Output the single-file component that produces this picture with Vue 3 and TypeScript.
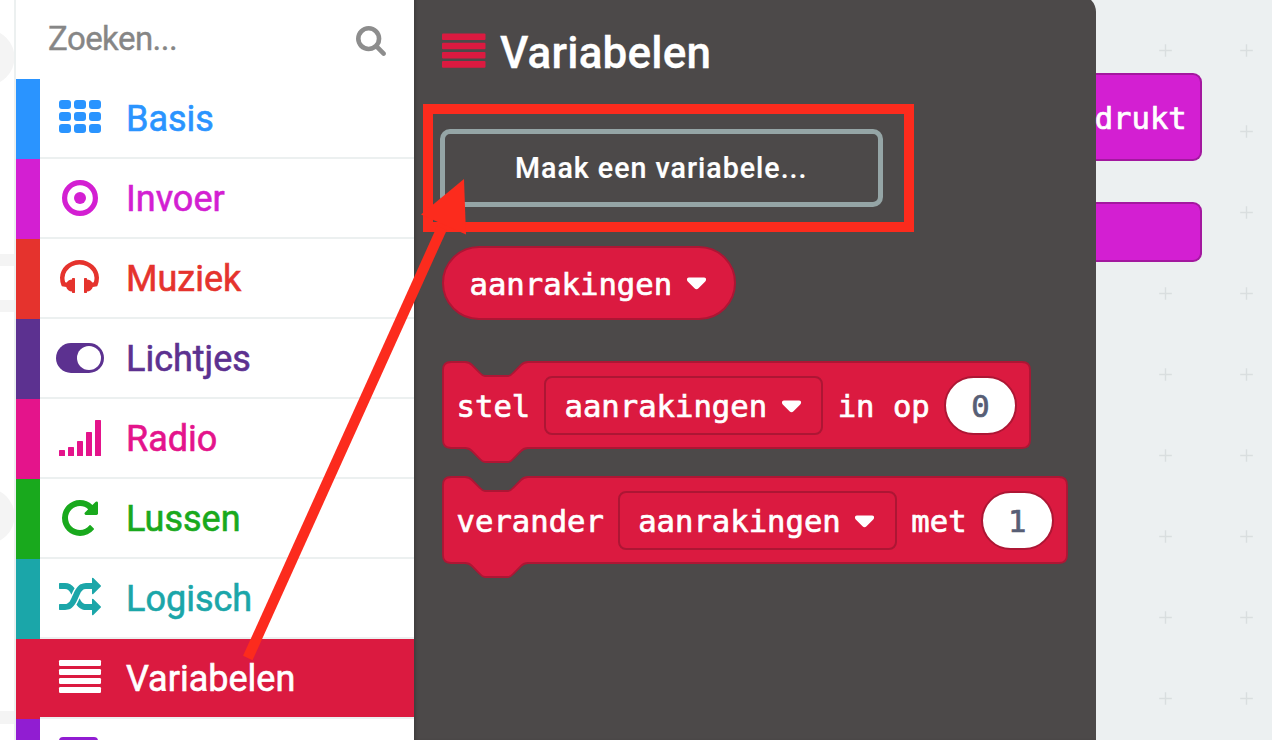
<script setup lang="ts">
interface Shape { d?: string; t?: string }
interface Category { name: string; color: string; icon: string }

const categories: Category[] = [
  { name: 'Basis', color: '#2a94ff', icon: 'grid' },
  { name: 'Invoer', color: '#d31fd2', icon: 'target' },
  { name: 'Muziek', color: '#e5332d', icon: 'headphones' },
  { name: 'Lichtjes', color: '#5c3190', icon: 'toggle' },
  { name: 'Radio', color: '#e4148b', icon: 'signal' },
  { name: 'Lussen', color: '#19a91d', icon: 'repeat' },
  { name: 'Logisch', color: '#1ba6a9', icon: 'random' },
  { name: 'Variabelen', color: '#db1a40', icon: 'lines' },
]

const glyphs: Record<string, Shape> = {
  headphones: {
    t: 'translate(8.5 18) scale(.0234375)',
    d: 'M1728 886q0 166-60 314l-20 49-185 33q-22 83-90.500 136.500t-156.500 53.500v32q0 14-9 23t-23 9h-64q-14 0-23-9t-9-23v-576q0-14 9-23t23-9h64q14 0 23 9t9 23v32q71 0 130 35.500t93 95.500l68-12q29-95 29-193 0-148-88-279t-236.500-209-315.500-78-315.500 78-236.500 209-88 279q0 98 29 193l68 12q34-60 93-95.500t130-35.500v-32q0-14 9-23t23-9h64q14 0 23 9t9 23v576q0 14-9 23t-23 9h-64q-14 0-23-9t-9-23v-32q-88 0-156.500-53.500t-90.500-136.500l-185-33-20-49q-60-148-60-314 0-151 67-291t179-242.500 266-163.500 320-61 320 61 266 163.500 179 242.500 67 291z',
  },
  repeat: {
    t: 'translate(9 18) scale(.0234375)',
    d: 'M1664 256v448q0 26-19 45t-45 19h-448q-42 0-59-40-17-39 14-69l138-138q-148-137-349-137-104 0-198.500 40.500t-163.500 109.500-109.500 163.500-40.500 198.500 40.500 198.500 109.500 163.500 163.500 109.500 198.500 40.500q119 0 225-52t179-147q7-10 23-12 15 0 25 9l137 138q9 8 9.500 20.500t-7.500 22.500q-109 132-264 204.500t-327 72.500q-156 0-298-61t-245-164-164-245-61-298 61-298 164-245 245-164 298-61q147 0 284.500 55.500t244.500 156.500l130-129q29-31 70-14 39 17 39 59z',
  },
  random: {
    t: 'translate(9 18) scale(.0234375)',
    d: 'M666 481q-60 92-137 273-22-45-37-72.500t-40.500-63.500-51-56.500-63-35-81.500-14.500h-224q-14 0-23-9t-9-23v-192q0-14 9-23t23-9h224q250 0 410 225zm1126 799q0 14-9 23l-320 320q-9 9-23 9-13 0-22.500-9.500t-9.500-22.500v-192q-32 0-85 .5t-81 1-73-1-71-5-64-10.500-63-18.500-58-28.500-59-40-55-53.500-56-69.500q59-93 136-273 22 45 37 72.500t40.500 63.500 51 56.500 63 35 81.500 14.500h256v-192q0-14 9-23t23-9q12 0 24 10l319 319q9 9 9 23zm0-896q0 14-9 23l-320 320q-9 9-23 9-13 0-22.500-9.500t-9.500-22.500v-192h-256q-48 0-87 15t-69 45-51 61.500-45 77.500q-32 62-78 171-29 66-49.500 111t-54 105-64 100-74 83-90 68.500-106.500 42-128 16.500h-224q-14 0-23-9t-9-23v-192q0-14 9-23t23-9h224q48 0 87-15t69-45 51-61.500 45-77.500q32-62 78-171 29-66 49.500-111t54-105 64-100 74-83 90-68.500 106.500-42 128-16.500h256v-192q0-14 9-23t23-9q12 0 24 10l319 319q9 9 9 23z',
  },
}

const searchPath = 'M1216 832q0-185-131.500-316.500t-316.500-131.500-316.500 131.500-131.500 316.500 131.500 316.500 316.500 131.500 316.500-131.500 131.500-316.500zm512 832q0 52-38 90t-90 38q-54 0-90-38l-343-342q-179 124-399 124-143 0-273.500-55.500t-225-150-150-225-55.500-273.500 55.500-273.500 150-225 225-150 273.500-55.500 273.500 55.500 225 150 150 225 55.500 273.500q0 220-124 399l343 343q37 37 37 90z'

const caret = 'M2 .5 H17 Q19.500 .5 19 3 Q18.800 4 18 4.800 L11.500 11.300 Q9.500 13 7.500 11.300 L1 4.800 Q.2 4 0 3 Q-.4 .5 2 .5Z'

const signal = [51, 48, 42, 33, 21]

interface Statement { width: number; before: string; after: string; value: string }
const statements: Statement[] = [
  { width: 589, before: 'stel', after: 'in op', value: '0' },
  { width: 626, before: 'verander', after: 'met', value: '1' },
]

// Outline of a stackable block: notch along the top edge, matching tab below.
function outline(w: number): string {
  const r = w - 1
  return `M1 9 Q1 1 9 1 H23 C26 1 28 2 30 4 L38 12 C40 14.500 41 15 43 15 H66 C68 15 69 14.500 71 12 L79 4 C81 2 83 1 86 1 H${r - 8} Q${r} 1 ${r} 9 V79 Q${r} 87 ${r - 8} 87 H86 C83 87 81 88 79 90 L71 98 C69 100.500 68 101 66 101 H43 C41 101 40 100.500 38 98 L30 90 C28 88 26 87 23 87 H9 Q1 87 1 79 Z`
}

const marks: { x: number; y: number }[] = []
for (let y = 50.5; y < 740; y += 81) for (const x of [69.5, 150.5]) marks.push({ x, y })
</script>

<template>
  <div class="editor">
    <div class="simulator">
      <svg width="14" height="740" fill="#f4f4f4">
        <circle cx="-13.5" cy="57.5" r="28" />
        <circle cx="-13.5" cy="516" r="28" />
        <rect y="254" width="14" height="12" />
        <rect y="300" width="14" height="12" />
        <rect y="711" width="14" height="13" />
      </svg>
    </div>

    <nav class="toolbox">
      <div class="search">
        <span>Zoeken...</span>
        <svg class="lens" width="34" height="34" fill="#8d8d8d"><path transform="translate(.85 .7) scale(.018)" :d="searchPath" /></svg>
      </div>
      <div v-for="c in categories" :key="c.name" class="row" :class="{ selected: c.icon === 'lines' }" :style="{ '--tone': c.color }">
        <div class="strip"></div>
        <div class="cell">
          <svg class="icon" width="60" height="78" fill="currentColor">
            <template v-if="c.icon === 'grid'">
              <template v-for="y in 3" :key="y">
                <rect v-for="x in 3" :key="x" :x="x * 15 - 6" :y="y * 12 + 9" width="12" height="9" rx="3" />
              </template>
            </template>
            <template v-else-if="c.icon === 'target'">
              <circle cx="30" cy="39" r="15.400" fill="none" stroke="currentColor" stroke-width="5.200" />
              <circle cx="30" cy="39" r="6" />
            </template>
            <template v-else-if="c.icon === 'toggle'">
              <rect x="6" y="24" width="48" height="30" rx="15" />
              <circle cx="39" cy="39" r="12" fill="#fff" />
            </template>
            <template v-else-if="c.icon === 'signal'">
              <rect v-for="(y, i) in signal" :key="i" :x="9 + i * 9" :y="y" width="6" :height="57 - y" rx=".6" />
            </template>
            <template v-else-if="c.icon === 'lines'">
              <rect v-for="i in 4" :key="i" x="9" :y="12 + i * 9" width="42" height="6" rx="1.300" />
            </template>
            <path v-else :transform="glyphs[c.icon].t" :d="glyphs[c.icon].d" />
          </svg>
          <span class="name">{{ c.name }}</span>
        </div>
      </div>
      <div class="row" :style="{ '--tone': '#911dd2' }">
        <div class="strip"></div>
        <div class="cell">
          <svg class="icon" width="60" height="78" fill="currentColor"><rect x="9" y="18" width="39" height="42" rx="4" /></svg>
        </div>
      </div>
    </nav>

    <main class="workspace">
      <svg class="grid" width="176" height="740">
        <path v-for="(m, i) in marks" :key="i" :d="`M${m.x - 6.3} ${m.y}h12.600M${m.x} ${m.y - 6.3}v12.600`" stroke="#d9dedf" stroke-width="1.400" />
      </svg>
      <section class="flyout">
        <header>
          <svg width="44" height="36" fill="#db1a40">
            <rect v-for="i in 4" :key="i" x="0" :y="(i - 1) * 9.2 + .5" width="43.500" height="6.600" rx="1" />
          </svg>
          <h1>Variabelen</h1>
        </header>
        <button type="button" class="make">Maak een variabele...</button>
        <div class="pill">
          <span class="code">aanrakingen</span>
          <svg class="caret" width="20" height="14"><path :d="caret" fill="#fff" /></svg>
        </div>
        <div v-for="s in statements" :key="s.before" class="statement">
          <svg class="shape" :width="s.width" height="102"><path :d="outline(s.width)" fill="#db1a40" stroke="#ad1634" stroke-width="1.800" /></svg>
          <span class="code">{{ s.before }}</span>
          <div class="field">
            <span class="code">aanrakingen</span>
            <svg class="caret" width="20" height="14"><path :d="caret" fill="#fff" /></svg>
          </div>
          <span class="code">{{ s.after }}</span>
          <div class="number"><span class="code">{{ s.value }}</span></div>
        </div>
      </section>
      <aside class="canvas">
        <div class="event"><span class="code">drukt</span></div>
        <div class="event foot"></div>
      </aside>
    </main>

    <svg class="annotation" width="1272" height="740">
      <rect x="428" y="109" width="481" height="118" fill="none" stroke="#fc2b1d" stroke-width="10" />
      <path d="M247.800 658 L442 228" stroke="#fc2b1d" stroke-width="10.400" />
      <path d="M464 179 L421 214.500 L466 234.500Z" fill="#fc2b1d" />
    </svg>
  </div>
</template>

<style>
body { margin: 0; overflow: hidden; }
</style>

<style scoped>
.editor { position: relative; display: flex; width: 1272px; height: 740px; overflow: hidden; background: #fff; font-family: Roboto, "Liberation Sans", sans-serif; }
.simulator { width: 14px; flex: none; background: #fff; }
.simulator svg { display: block; }
.toolbox { width: 398px; flex: none; border-left: 2px solid #ecf0f0; background: #fff; }
.search { height: 79px; box-sizing: border-box; padding: 0 26px 0 32px; display: flex; justify-content: space-between; align-items: flex-start; font-size: 33px; letter-spacing: -.55px; line-height: 78px; color: #868686; -webkit-text-stroke: .35px currentColor; }
.lens { margin-top: 23px; }
.row { display: flex; height: 80px; }
.strip { width: 24px; flex: none; background: var(--tone); }
.cell { flex: 1; height: 78px; display: flex; border-bottom: 2px solid #ecf0f0; color: var(--tone); }
.icon { flex: none; margin-left: 10px; }
.name { margin-left: 16px; font-size: 36px; line-height: 80px; -webkit-text-stroke: .6px currentColor; }
.selected .cell { background: var(--tone); color: #fff; }
.workspace { position: relative; display: flex; flex: 1; background: #ecf0f1; }
.grid { position: absolute; left: 682px; top: 0; }
.flyout { width: 682.300px; height: 745px; margin-top: -5px; flex: none; box-sizing: border-box; padding: 0 0 0 28px; background: #4c4949; border-top-right-radius: 17px; box-shadow: inset 3px 0 3px -1px #403e3e; }
header { display: flex; height: 134px; box-sizing: border-box; padding-top: 38px; align-items: flex-start; }
h1 { margin: 0 0 0 14px; font-size: 44px; font-weight: 500; letter-spacing: .2px; line-height: 40px; color: #fff; -webkit-text-stroke: .3px #fff; }
.make { display: block; width: 442.500px; height: 78px; margin: 0 0 0 -2px; padding: 0; box-sizing: border-box; border: 5.500px solid #95a5a6; border-radius: 10px; background: transparent; color: #fff; font: 500 28.600px/66px Roboto, "Liberation Sans", sans-serif; letter-spacing: 1px; -webkit-text-stroke: .2px #fff; }
.code { font-family: "DejaVu Sans Mono", "Liberation Mono", monospace; font-size: 30.600px; line-height: 40px; color: #fff; white-space: pre; padding-top: 3px; -webkit-text-stroke: .7px currentColor; }
.pill { width: 294px; height: 74px; margin-top: 38.500px; box-sizing: border-box; padding-left: 25.500px; display: flex; align-items: center; border: 2px solid #ad1634; border-radius: 37px; background: #db1a40; }
.pill .code, .event .code { padding-top: 5px; }
.caret { margin: 3px 0 0 14.500px; overflow: visible; }
.statement { position: relative; display: flex; align-items: center; gap: 14.200px; width: max-content; height: 88px; margin-top: 27px; padding: 0 14.600px; }
.pill + .statement { margin-top: 41.500px; }
.shape { position: absolute; left: 0; top: 0; }
.statement > .code, .field, .number { position: relative; }
.field { width: 279px; height: 59px; box-sizing: border-box; padding-left: 18px; display: flex; align-items: center; border: 2px solid #ad1634; border-radius: 8px; }
.number { width: 73px; height: 59px; box-sizing: border-box; display: flex; align-items: center; justify-content: center; border: 2px solid #ad1634; border-radius: 30px; background: #fff; }
.number .code { color: #575e75; }
.canvas { position: relative; width: 106px; padding-top: 72.500px; }
.event { height: 88px; box-sizing: border-box; display: flex; align-items: center; justify-content: flex-end; padding-right: 13.500px; border: 2px solid #a3189f; border-left: 0; border-radius: 0 9px 9px 0; background: #d31fd2; }
.foot { height: 60px; margin-top: 41.500px; }
.annotation { position: absolute; left: 0; top: 0; }
</style>
